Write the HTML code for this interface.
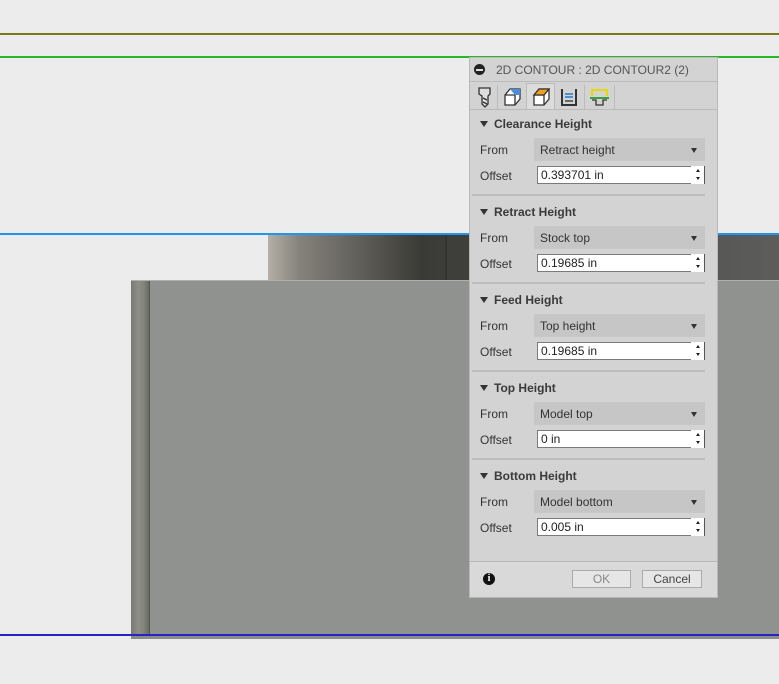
<!DOCTYPE html>
<html><head><style>
body{margin:0;width:779px;height:684px;background:#ececec;position:relative;overflow:hidden;font-family:"Liberation Sans",Arial,sans-serif;}
.a{position:absolute;}
.t{font-size:12px;color:#333;}
.h{font-size:12px;font-weight:bold;color:#3a3a3a;}
.dd{position:absolute;left:534px;width:171px;height:23px;background:#c6c6c6;font-size:12px;color:#333;line-height:25px;text-indent:6px;}
.dd:after{content:"";position:absolute;right:8px;top:10px;border-left:3.5px solid transparent;border-right:3.5px solid transparent;border-top:5px solid #333;}
.in{position:absolute;left:537px;width:153px;height:16px;background:#fff;border:1px solid #7a7a7a;font-size:12px;color:#222;line-height:17px;text-indent:3px;}
.sp{position:absolute;left:691px;width:13px;height:18px;background:#fff;border-right:1px solid #555;}
.sp:before{content:"";position:absolute;left:5px;top:3px;border-left:2px solid transparent;border-right:2px solid transparent;border-bottom:3px solid #222;}
.sp:after{content:"";position:absolute;left:5px;top:11px;border-left:2px solid transparent;border-right:2px solid transparent;border-top:3px solid #222;}
.sep{position:absolute;left:472px;width:233px;height:2px;background:#bdbdbd;}
.tri{display:inline-block;border-left:4px solid transparent;border-right:4px solid transparent;border-top:6px solid #333;margin-right:6px;vertical-align:1px;}
</style></head><body>
<div class="a" style="left:0;top:33px;width:779px;height:2px;background:#7d7a1e"></div>
<div class="a" style="left:0;top:56px;width:779px;height:2px;background:#2bb52b"></div>
<div class="a" style="left:0;top:233px;width:779px;height:2px;background:#1e96ee"></div>
<div class="a" style="left:268px;top:235px;width:511px;height:45px;background:linear-gradient(90deg,#b4b0a8 0%,#85837b 6%,#3a3a36 30%,#474745 55%,#5d5d5b 100%)"></div>
<div class="a" style="left:445px;top:235px;width:2px;height:45px;background:#333"></div>
<div class="a" style="left:131px;top:280px;width:648px;height:358px;background:#909290;border-top:1px solid #b0b0aa"></div>
<div class="a" style="left:131px;top:281px;width:18px;height:357px;background:linear-gradient(90deg,#7a7a72,#8e8e88 40%,#84847e 70%,#6a6a66)"></div>
<div class="a" style="left:149px;top:281px;width:1px;height:357px;background:#555"></div>
<div class="a" style="left:0;top:634px;width:779px;height:2px;background:#2424c4"></div>
<div class="a" style="left:131px;top:636px;width:648px;height:3px;background:#8a8c8a"></div>

<div class="a" style="left:469px;top:57px;width:249px;height:541px;background:#d3d3d3;border:1px solid #b8b8b8;box-sizing:border-box"></div>
<div class="a" style="left:474px;top:64px;width:11px;height:11px;border-radius:50%;background:#222"></div>
<div class="a" style="left:476px;top:69px;width:7px;height:1.5px;background:#ddd"></div>
<div class="a t" style="left:496px;top:63px;color:#555;font-size:12px">2D CONTOUR : 2D CONTOUR2 (2)</div>
<div class="a" style="left:470px;top:81px;width:247px;height:1px;background:#bbb"></div>
<div class="a" style="left:526px;top:83px;width:29px;height:27px;background:#dcdcdc;border:1px solid #bbb;border-bottom:none;box-sizing:border-box"></div>
<div class="a" style="left:497px;top:85px;width:1px;height:24px;background:#bbb"></div>
<div class="a" style="left:584px;top:85px;width:1px;height:24px;background:#bbb"></div>
<div class="a" style="left:614px;top:85px;width:1px;height:24px;background:#bbb"></div>
<div class="a" style="left:470px;top:109px;width:247px;height:1px;background:#bbb"></div>
<svg class="a" style="left:476px;top:85px" width="140" height="24">
<path d="M3 3h11v6l-2 2v8l-3 3-3-3v-8l-3-2z" fill="#ddd" stroke="#333" stroke-width="1.3"/><path d="M7 13l4 2M7 17l4 2" stroke="#333" stroke-width="1.3"/>
<path d="M29 10l5-6h10v10l-5 6h-10z" fill="#fff" stroke="#333" stroke-width="1.3"/><path d="M29 10h10v10M39 10l5-6" stroke="#333" fill="none" stroke-width="1.3"/><path d="M34 4h10v6l-5 0z" fill="#4a8fd8"/>
<path d="M58 10l5-6h10v10l-5 6h-10z" fill="#fff" stroke="#333" stroke-width="1.3"/><path d="M58 10h10v10M68 10l5-6" stroke="#333" fill="none" stroke-width="1.3"/><path d="M58 10l5-6h10l-5 6z" fill="#f0a020" stroke="#333" stroke-width="1.3"/>
<path d="M86 4v16h14v-16" fill="none" stroke="#333" stroke-width="2"/><path d="M89 9h8M89 12h8" stroke="#4a8fd8" stroke-width="2"/><path d="M89 16h8" stroke="#444" stroke-width="1.5"/>
<path d="M116 11v-6h15v6" fill="none" stroke="#e8d800" stroke-width="2"/><path d="M114 13h19" stroke="#3aa03a" stroke-width="2"/><path d="M116 15h4v5h7v-5h4" fill="none" stroke="#333" stroke-width="1.3"/>
</svg>

<div class="a h" style="left:480px;top:117px"><span class="tri"></span>Clearance Height</div>
<div class="a t" style="left:480px;top:143px">From</div><div class="dd" style="top:138px">Retract height</div>
<div class="a t" style="left:480px;top:169px">Offset</div><div class="in" style="top:166px">0.393701 in</div><div class="sp" style="top:166px"></div>
<div class="sep" style="top:194px"></div>

<div class="a h" style="left:480px;top:205px"><span class="tri"></span>Retract Height</div>
<div class="a t" style="left:480px;top:231px">From</div><div class="dd" style="top:226px">Stock top</div>
<div class="a t" style="left:480px;top:257px">Offset</div><div class="in" style="top:254px">0.19685 in</div><div class="sp" style="top:254px"></div>
<div class="sep" style="top:282px"></div>

<div class="a h" style="left:480px;top:293px"><span class="tri"></span>Feed Height</div>
<div class="a t" style="left:480px;top:319px">From</div><div class="dd" style="top:314px">Top height</div>
<div class="a t" style="left:480px;top:345px">Offset</div><div class="in" style="top:342px">0.19685 in</div><div class="sp" style="top:342px"></div>
<div class="sep" style="top:370px"></div>

<div class="a h" style="left:480px;top:381px"><span class="tri"></span>Top Height</div>
<div class="a t" style="left:480px;top:407px">From</div><div class="dd" style="top:402px">Model top</div>
<div class="a t" style="left:480px;top:433px">Offset</div><div class="in" style="top:430px">0 in</div><div class="sp" style="top:430px"></div>
<div class="sep" style="top:458px"></div>

<div class="a h" style="left:480px;top:469px"><span class="tri"></span>Bottom Height</div>
<div class="a t" style="left:480px;top:495px">From</div><div class="dd" style="top:490px">Model bottom</div>
<div class="a t" style="left:480px;top:521px">Offset</div><div class="in" style="top:518px">0.005 in</div><div class="sp" style="top:518px"></div>

<div class="a" style="left:470px;top:561px;width:247px;height:1px;background:#b5b5b5"></div>
<div class="a" style="left:470px;top:562px;width:247px;height:35px;background:#d9d9d9"></div>
<div class="a" style="left:483px;top:573px;width:12px;height:12px;border-radius:50%;background:#111;color:#fff;font:bold 10px 'Liberation Serif',serif;text-align:center;line-height:12px">i</div>
<div class="a" style="left:572px;top:570px;width:59px;height:18px;border:1px solid #aaa;box-sizing:border-box;background:#e6e6e6;color:#888;font-size:12px;text-align:center;line-height:17px">OK</div>
<div class="a" style="left:642px;top:570px;width:60px;height:18px;border:1px solid #aaa;box-sizing:border-box;background:#e6e6e6;color:#444;font-size:12px;text-align:center;line-height:17px">Cancel</div>
</body></html>
